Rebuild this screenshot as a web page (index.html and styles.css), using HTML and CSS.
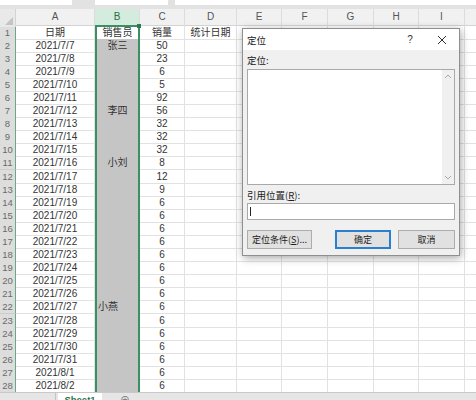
FILE: index.html
```html
<!DOCTYPE html>
<html lang="zh-CN">
<head>
<meta charset="utf-8">
<title>定位</title>
<link rel="stylesheet" href="styles.css">
</head>
<body>
<div class="topbar"><span class="box box1"></span><span class="box box2"></span><span class="box box3"></span></div>
<div class="sheet">
  <div class="hdr"><span class="corner"></span><span class="h">A</span><span class="h hb">B</span><span class="h">C</span><span class="h">D</span><span class="h">E</span><span class="h">F</span><span class="h">G</span><span class="h">H</span><span class="h">I</span><span class="h"></span></div>
  <div class="row first"><span class="rh">1</span><span class="c">日期</span><span class="c cb act">销售员<i class="handle"></i></span><span class="c">销量</span><span class="c">统计日期</span><span class="c"></span><span class="c"></span><span class="c"></span><span class="c"></span><span class="c"></span><span class="c"></span></div>
  <div class="row"><span class="rh">2</span><span class="c">2021/7/7</span><span class="c cb">张三</span><span class="c">50</span><span class="c"></span><span class="c"></span><span class="c"></span><span class="c"></span><span class="c"></span><span class="c"></span><span class="c"></span></div>
  <div class="row"><span class="rh">3</span><span class="c">2021/7/8</span><span class="c cb"></span><span class="c">23</span><span class="c"></span><span class="c"></span><span class="c"></span><span class="c"></span><span class="c"></span><span class="c"></span><span class="c"></span></div>
  <div class="row"><span class="rh">4</span><span class="c">2021/7/9</span><span class="c cb"></span><span class="c">6</span><span class="c"></span><span class="c"></span><span class="c"></span><span class="c"></span><span class="c"></span><span class="c"></span><span class="c"></span></div>
  <div class="row"><span class="rh">5</span><span class="c">2021/7/10</span><span class="c cb"></span><span class="c">5</span><span class="c"></span><span class="c"></span><span class="c"></span><span class="c"></span><span class="c"></span><span class="c"></span><span class="c"></span></div>
  <div class="row"><span class="rh">6</span><span class="c">2021/7/11</span><span class="c cb"></span><span class="c">92</span><span class="c"></span><span class="c"></span><span class="c"></span><span class="c"></span><span class="c"></span><span class="c"></span><span class="c"></span></div>
  <div class="row"><span class="rh">7</span><span class="c">2021/7/12</span><span class="c cb">李四</span><span class="c">56</span><span class="c"></span><span class="c"></span><span class="c"></span><span class="c"></span><span class="c"></span><span class="c"></span><span class="c"></span></div>
  <div class="row"><span class="rh">8</span><span class="c">2021/7/13</span><span class="c cb"></span><span class="c">32</span><span class="c"></span><span class="c"></span><span class="c"></span><span class="c"></span><span class="c"></span><span class="c"></span><span class="c"></span></div>
  <div class="row"><span class="rh">9</span><span class="c">2021/7/14</span><span class="c cb"></span><span class="c">32</span><span class="c"></span><span class="c"></span><span class="c"></span><span class="c"></span><span class="c"></span><span class="c"></span><span class="c"></span></div>
  <div class="row"><span class="rh">10</span><span class="c">2021/7/15</span><span class="c cb"></span><span class="c">32</span><span class="c"></span><span class="c"></span><span class="c"></span><span class="c"></span><span class="c"></span><span class="c"></span><span class="c"></span></div>
  <div class="row"><span class="rh">11</span><span class="c">2021/7/16</span><span class="c cb">小刘</span><span class="c">8</span><span class="c"></span><span class="c"></span><span class="c"></span><span class="c"></span><span class="c"></span><span class="c"></span><span class="c"></span></div>
  <div class="row"><span class="rh">12</span><span class="c">2021/7/17</span><span class="c cb"></span><span class="c">12</span><span class="c"></span><span class="c"></span><span class="c"></span><span class="c"></span><span class="c"></span><span class="c"></span><span class="c"></span></div>
  <div class="row"><span class="rh">13</span><span class="c">2021/7/18</span><span class="c cb"></span><span class="c">9</span><span class="c"></span><span class="c"></span><span class="c"></span><span class="c"></span><span class="c"></span><span class="c"></span><span class="c"></span></div>
  <div class="row"><span class="rh">14</span><span class="c">2021/7/19</span><span class="c cb"></span><span class="c">6</span><span class="c"></span><span class="c"></span><span class="c"></span><span class="c"></span><span class="c"></span><span class="c"></span><span class="c"></span></div>
  <div class="row"><span class="rh">15</span><span class="c">2021/7/20</span><span class="c cb"></span><span class="c">6</span><span class="c"></span><span class="c"></span><span class="c"></span><span class="c"></span><span class="c"></span><span class="c"></span><span class="c"></span></div>
  <div class="row"><span class="rh">16</span><span class="c">2021/7/21</span><span class="c cb"></span><span class="c">6</span><span class="c"></span><span class="c"></span><span class="c"></span><span class="c"></span><span class="c"></span><span class="c"></span><span class="c"></span></div>
  <div class="row"><span class="rh">17</span><span class="c">2021/7/22</span><span class="c cb"></span><span class="c">6</span><span class="c"></span><span class="c"></span><span class="c"></span><span class="c"></span><span class="c"></span><span class="c"></span><span class="c"></span></div>
  <div class="row"><span class="rh">18</span><span class="c">2021/7/23</span><span class="c cb"></span><span class="c">6</span><span class="c"></span><span class="c"></span><span class="c"></span><span class="c"></span><span class="c"></span><span class="c"></span><span class="c"></span></div>
  <div class="row"><span class="rh">19</span><span class="c">2021/7/24</span><span class="c cb"></span><span class="c">6</span><span class="c"></span><span class="c"></span><span class="c"></span><span class="c"></span><span class="c"></span><span class="c"></span><span class="c"></span></div>
  <div class="row"><span class="rh">20</span><span class="c">2021/7/25</span><span class="c cb"></span><span class="c">6</span><span class="c"></span><span class="c"></span><span class="c"></span><span class="c"></span><span class="c"></span><span class="c"></span><span class="c"></span></div>
  <div class="row"><span class="rh">21</span><span class="c">2021/7/26</span><span class="c cb"></span><span class="c">6</span><span class="c"></span><span class="c"></span><span class="c"></span><span class="c"></span><span class="c"></span><span class="c"></span><span class="c"></span></div>
  <div class="row"><span class="rh">22</span><span class="c">2021/7/27</span><span class="c cb left">小燕</span><span class="c">6</span><span class="c"></span><span class="c"></span><span class="c"></span><span class="c"></span><span class="c"></span><span class="c"></span><span class="c"></span></div>
  <div class="row"><span class="rh">23</span><span class="c">2021/7/28</span><span class="c cb"></span><span class="c">6</span><span class="c"></span><span class="c"></span><span class="c"></span><span class="c"></span><span class="c"></span><span class="c"></span><span class="c"></span></div>
  <div class="row"><span class="rh">24</span><span class="c">2021/7/29</span><span class="c cb"></span><span class="c">6</span><span class="c"></span><span class="c"></span><span class="c"></span><span class="c"></span><span class="c"></span><span class="c"></span><span class="c"></span></div>
  <div class="row"><span class="rh">25</span><span class="c">2021/7/30</span><span class="c cb"></span><span class="c">6</span><span class="c"></span><span class="c"></span><span class="c"></span><span class="c"></span><span class="c"></span><span class="c"></span><span class="c"></span></div>
  <div class="row"><span class="rh">26</span><span class="c">2021/7/31</span><span class="c cb"></span><span class="c">6</span><span class="c"></span><span class="c"></span><span class="c"></span><span class="c"></span><span class="c"></span><span class="c"></span><span class="c"></span></div>
  <div class="row"><span class="rh">27</span><span class="c">2021/8/1</span><span class="c cb"></span><span class="c">6</span><span class="c"></span><span class="c"></span><span class="c"></span><span class="c"></span><span class="c"></span><span class="c"></span><span class="c"></span></div>
  <div class="row"><span class="rh">28</span><span class="c">2021/8/2</span><span class="c cb"></span><span class="c">6</span><span class="c"></span><span class="c"></span><span class="c"></span><span class="c"></span><span class="c"></span><span class="c"></span><span class="c"></span></div>
</div>
<div class="tabs">
  <span class="tabnav"></span>
  <span class="tab">Sheet1</span>
  <span class="tabadd">⊕</span>
</div>

<div class="dlg">
  <div class="dlg-title">
    <span class="dlg-name">定位</span>
    <span class="help">?</span>
    <svg class="close" width="12" height="12" viewBox="0 0 12 12"><path d="M2 2 L10 10 M10 2 L2 10" stroke="#333" stroke-width="1" fill="none"/></svg>
  </div>
  <div class="dlg-body">
    <div class="lbl">定位:</div>
    <div class="list">
      <div class="sb">
        <svg width="8" height="6" viewBox="0 0 8 6"><path d="M1 5 L4 2 L7 5" stroke="#a8a8a8" stroke-width="1" fill="none"/></svg>
        <svg width="8" height="6" viewBox="0 0 8 6"><path d="M1 1 L4 4 L7 1" stroke="#a8a8a8" stroke-width="1" fill="none"/></svg>
      </div>
    </div>
    <div class="lbl lbl2">引用位置(<u>R</u>):</div>
    <div class="inp"><span class="caret"></span></div>
    <div class="btns">
      <span class="btn btn-goto">定位条件(<u>S</u>)...</span>
      <span class="btn btn-ok">确定</span>
      <span class="btn btn-cancel">取消</span>
    </div>
  </div>
</div>
</body>
</html>
```

FILE: styles.css
```css
* { box-sizing: border-box; margin: 0; padding: 0; }
html, body { width: 476px; height: 400px; overflow: hidden; background: #fff; }
body {
  font-family: "Liberation Sans", "Noto Sans CJK SC", sans-serif;
  font-size: 10px;
  color: #333;
  position: relative;
}

.topbar { height: 9px; background: #e2e2e2; display: flex; align-items: flex-start; }
.box { height: 5px; background: #fff; }
.box1 { width: 72px; }
.box2 { width: 73px; margin-left: 23px; }
.box3 { flex: 1; margin-left: 7px; }

.sheet { width: 476px; overflow: hidden; }
.hdr, .row {
  display: grid;
  grid-template-columns: 16px 79px 45px 45px 52px 45px 46px 46px 45px 46px 46px;
  width: 511px;
}
.hdr { height: 16.5px; background: #f1f1f1; border-bottom: 1px solid #d3d3d3; }
.h { text-align: center; line-height: 16px; color: #555; border-right: 1px solid #dcdcdc; }
.hb { background: #d3ecdd; color: #2a6e48; border-bottom: 2px solid #3b8f62; }
.corner { background: #e9e9e9; border-right: 1px solid #d3d3d3; position: relative; }
.corner::after {
  content: ""; position: absolute; right: 2px; bottom: 2px;
  border-left: 8px solid transparent; border-bottom: 8px solid #c4c4c4;
}

.row { height: 13.1px; }
.rh {
  background: #dddddd; color: #6a6a6a; text-align: center; line-height: 12px; padding-top: 1px;
  border-right: 1px solid #6aa888; border-bottom: 1px solid #cdcdcd; font-size: 9.5px;
}
.c {
  border-right: 1px solid #e2e2e2; border-bottom: 1px solid #e2e2e2;
  text-align: center; line-height: 12px; padding-top: 1px; white-space: nowrap;
  color: #333;
}
.cb {
  background: #c5c5c5; border-left: 2px solid #3b8f62; border-right: 2px solid #3b8f62;
  border-bottom: none; position: relative;
}
.cb.act { background: #fff; border-top: 1.5px solid #3b8f62; padding-top: 0; }
.cb.left { text-align: left; padding-left: 1px; }
.handle {
  position: absolute; right: -3px; top: -3px; width: 4px; height: 4px; background: #2d7a50;
}

.tabs {
  height: 8px; background: #e6e6e6; border-top: 1px solid #c9c9c9;
  display: flex; align-items: flex-start; overflow: hidden;
}
.tabnav { width: 56px; height: 8px; border-right: 1px solid #c4c4c4; }
.tab {
  width: 44px; height: 8px; margin-left: 2px; background: #fff; color: #2a7a4d;
  font-weight: bold; font-size: 9.5px; text-align: center; line-height: 14px;
  overflow: hidden;
}
.tabadd { margin-left: 18px; color: #777; font-size: 10px; line-height: 16px; overflow: hidden; }

.dlg {
  position: absolute; left: 242px; top: 28px; width: 218px; height: 228px;
  border: 1px solid #8f8f8f; background: #f0f0f0;
  box-shadow: 1px 2px 8px rgba(0, 0, 0, 0.35);
  display: flex; flex-direction: column;
  font-family: "Noto Sans CJK SC", "Liberation Sans", sans-serif;
  color: #222;
}
.dlg-title {
  height: 21px; background: #fff; display: flex; align-items: center;
  padding-left: 4px; padding-right: 11px;
}
.dlg-name { flex: 1; font-size: 9.5px; }
.help { width: 12px; text-align: center; font-family: "Liberation Sans", sans-serif; font-size: 10px; color: #333; }
.close { margin-left: 20px; display: block; }

.dlg-body { padding: 3px 4px 0 4px; display: flex; flex-direction: column; }
.lbl { height: 14px; line-height: 14px; font-size: 9.5px; }
.list {
  margin-top: 2px; height: 116px; background: #fff; border: 1px solid #a9a9a9;
  display: flex; justify-content: flex-end;
}
.sb {
  width: 12px; height: 100%; background: #f0f0f0;
  display: flex; flex-direction: column; justify-content: space-between; align-items: center;
  padding: 3px 0;
}
.sb svg { display: block; }
.lbl2 { margin-top: 3px; }
.inp {
  margin-top: 1px; height: 17px; background: #fff; border: 1px solid #a9a9a9;
  padding: 3px 0 0 2px;
}
.caret { display: block; width: 1px; height: 9px; background: #222; }
.btns { margin-top: 10px; display: flex; }
.btn {
  height: 19px; background: #e1e1e1; border: 1px solid #adadad;
  text-align: center; line-height: 17px; font-size: 9px; color: #222;
}
.btn-goto { width: 65px; }
.btn-ok { width: 56px; margin-left: 23px; border: 2px solid #2b7fcf; line-height: 15px; }
.btn-cancel { width: 57px; margin-left: 7px; }
```
